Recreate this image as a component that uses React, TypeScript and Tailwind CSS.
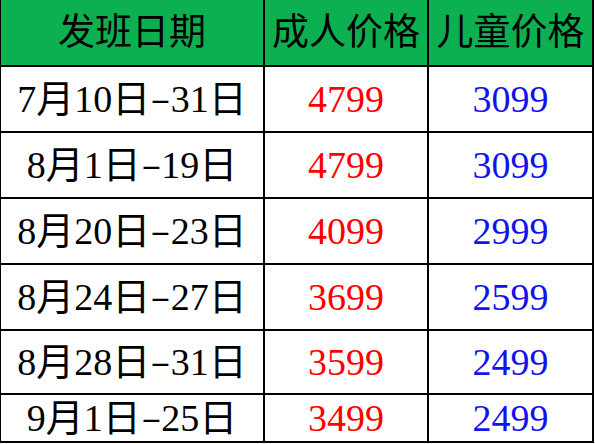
import React from 'react';

const rows = [
  { date: '7月10日-31日', adult: '4799', child: '3099', h: 'h-[66px]' },
  { date: '8月1日-19日', adult: '4799', child: '3099', h: 'h-[66px]' },
  { date: '8月20日-23日', adult: '4099', child: '2999', h: 'h-[66px]' },
  { date: '8月24日-27日', adult: '3699', child: '2599', h: 'h-[66px]' },
  { date: '8月28日-31日', adult: '3599', child: '2499', h: 'h-[64px]' },
  { date: '9月1日-25日', adult: '3499', child: '2499', h: 'h-[48px]' },
];

const font = { fontFamily: '"Liberation Serif", "Noto Sans CJK SC", serif' };

const Cell: React.FC<{ w: string; className?: string; children: React.ReactNode }> = ({ w, className = '', children }) => (
  <div className={`${w} shrink-0 flex items-center justify-center border-r-2 border-b-2 border-black ${className}`}>
    {children}
  </div>
);

// the dash in the source is wider and thinner than a Times hyphen
const DateText: React.FC<{ text: string }> = ({ text }) => {
  const [a, b] = text.split('-');
  return (
    <span className="whitespace-nowrap">
      {a}
      <span className="inline-block mx-[4px] scale-x-[1.6] scale-y-75">-</span>
      {b}
    </span>
  );
};

export default function App() {
  return (
    <div className="w-[595px] h-[444px] overflow-hidden bg-white" style={font}>
      <div className="border-l border-black w-fit">
        <div className="flex h-[67px] bg-[#0db050] text-[37px] leading-none text-black">
          <Cell w="w-[264px]">发班日期</Cell>
          <Cell w="w-[164px]">成人价格</Cell>
          <Cell w="w-[165px]">儿童价格</Cell>
        </div>
        {rows.map((r) => (
          <div key={r.date} className={`flex ${r.h} text-[38px] leading-none`}>
            <Cell w="w-[264px]" className="text-black">
              <DateText text={r.date} />
            </Cell>
            <Cell w="w-[164px]" className="text-[#ff0000]">{r.adult}</Cell>
            <Cell w="w-[165px]" className="text-[#1212ee]">{r.child}</Cell>
          </div>
        ))}
      </div>
    </div>
  );
}
